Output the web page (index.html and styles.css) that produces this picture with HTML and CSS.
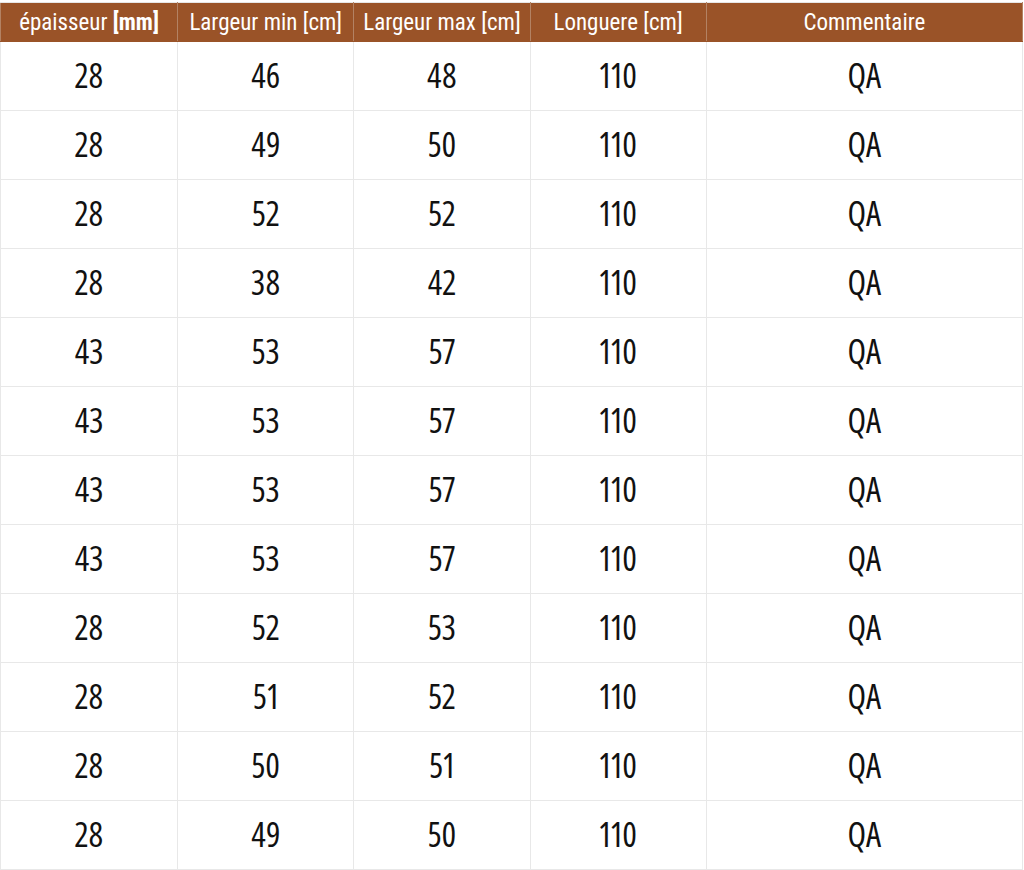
FILE: index.html
```html
<!DOCTYPE html>
<html lang="fr">
<head>
<meta charset="utf-8">
<title>Tableau</title>
<link rel="stylesheet" href="styles.css">
</head>
<body>
<table class="spec">
  <colgroup>
    <col class="c1"><col class="c2"><col class="c3"><col class="c4"><col class="c5">
  </colgroup>
  <thead>
    <tr>
      <th>épaisseur <b>[mm]</b></th>
      <th>Largeur min [cm]</th>
      <th>Largeur max [cm]</th>
      <th>Longuere [cm]</th>
      <th>Commentaire</th>
    </tr>
  </thead>
  <tbody>
    <tr><td>28</td><td>46</td><td>48</td><td>110</td><td>QA</td></tr>
    <tr><td>28</td><td>49</td><td>50</td><td>110</td><td>QA</td></tr>
    <tr><td>28</td><td>52</td><td>52</td><td>110</td><td>QA</td></tr>
    <tr><td>28</td><td>38</td><td>42</td><td>110</td><td>QA</td></tr>
    <tr><td>43</td><td>53</td><td>57</td><td>110</td><td>QA</td></tr>
    <tr><td>43</td><td>53</td><td>57</td><td>110</td><td>QA</td></tr>
    <tr><td>43</td><td>53</td><td>57</td><td>110</td><td>QA</td></tr>
    <tr><td>43</td><td>53</td><td>57</td><td>110</td><td>QA</td></tr>
    <tr><td>28</td><td>52</td><td>53</td><td>110</td><td>QA</td></tr>
    <tr><td>28</td><td>51</td><td>52</td><td>110</td><td>QA</td></tr>
    <tr><td>28</td><td>50</td><td>51</td><td>110</td><td>QA</td></tr>
    <tr><td>28</td><td>49</td><td>50</td><td>110</td><td>QA</td></tr>
  </tbody>
</table>
</body>
</html>
```
FILE: styles.css
```css
html, body {
  margin: 0;
  padding: 0;
  background: #ffffff;
}
body {
  padding-top: 2px;
}
.spec {
  border-collapse: collapse;
  table-layout: fixed;
  width: 1023px;
}
.c1 { width: 177px; }
.c2, .c3, .c4 { width: 176px; }
.c5 { width: 316px; }
.spec th {
  background: #9a5328;
  color: #ffffff;
  font-family: "Roboto Condensed", "Open Sans", sans-serif;
  font-weight: 400;
  font-size: 23px;
  height: 38px;
  padding: 0;
  text-align: center;
  border: 1px solid #e6e6e6;
  border-bottom: 1px solid #9a5328;
  border-left-color: #b38263;
  border-right-color: #b38263;
}
.spec th b {
  font-weight: 700;
}
.spec td {
  height: 66px;
  padding: 0 0 2px;
  text-align: center;
  font-family: "Open Sans", "Roboto Condensed", sans-serif;
  font-stretch: 75%;
  font-size: 34px;
  font-weight: 400;
  font-variant-numeric: proportional-nums;
  color: #111111;
  border: 1px solid #e8e8e8;
}
```
